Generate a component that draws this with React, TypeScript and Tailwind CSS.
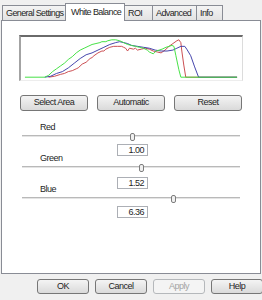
const font = { fontFamily: '"Liberation Sans", Arial, sans-serif' };

const tabs = [
  { label: "General Settings", w: "w-[64px]" },
  { label: "White Balance", w: "w-[60px]", active: true },
  { label: "ROI", w: "w-[29px]" },
  { label: "Advanced", w: "w-[45px]" },
  { label: "Info", w: "w-[27px]" },
];

const red =
  "28,43 34,42 40,40 44,39 48,37 52,36 56,34 58,33 62,29 66,27 70,23 72,22 74,20 78,17 82,15 84,15 86,13 90,11 94,10 98,10 102,10 104,11 106,12 108,15 110,12 114,13 116,12 118,14 122,13 126,12 130,13 134,15 138,16 142,17 146,14 150,10 154,7 158,4 160,3 162,6 163,15 165,30 167,43 219,43";
const blue =
  "24,43 30,42 36,39 42,37 48,33 54,28 60,23 66,19 72,17 78,14 84,11 90,8 96,6 100,5 104,6 108,7 112,9 118,10 124,11 130,12 136,14 142,15 148,15 154,14 158,12 162,10 166,10 168,13 172,20 176,32 180,43 219,43";
const green =
  "4,43 24,43 28,41 32,37 36,34 40,31 44,28 48,24 52,21 56,17 60,14 64,12 68,10 72,8 76,7 80,6 82,5 86,5 88,4 92,3 96,3 100,4 104,6 108,8 112,9 116,10 120,11 124,12 128,14 130,16 132,17 134,18 137,15 140,14 143,13 147,11 150,10 153,9 155,10 157,20 160,35 162,43 219,43";

function Btn({ label, w, disabled }: { label: string; w: string; disabled?: boolean }) {
  return (
    <div
      className={`${w} flex shrink-0 items-center justify-center rounded-[3px] border ${
        disabled
          ? "border-[#b5b8bb] bg-[#f4f4f4] text-[#a3a3a3]"
          : "border-[#767676] bg-linear-to-b from-[#f4f4f4] to-[#dadada] text-[#1e1e1e]"
      }`}
    >
      {label}
    </div>
  );
}

function Slider({ pos }: { pos: number }) {
  return (
    <div className="relative ml-[20px] h-[9px] w-[218px]">
      <div className="absolute top-[3px] left-0 h-[2px] w-full border-t border-[#b9b9b9] bg-[#e4e4e4]" />
      <div
        className="absolute top-[1px] h-[8px] w-[5px] rounded-[2px] border border-[#7d7d7d] bg-[#f0f0f0]"
        style={{ left: pos - 22 - 2 }}
      />
    </div>
  );
}

function Value({ v }: { v: string }) {
  return (
    <div className="flex h-[12px] w-[31px] items-center justify-end border border-[#acafb5] bg-white pr-[3px] leading-none">
      {v}
    </div>
  );
}

export default function App() {
  return (
    <div
      className="h-[300px] w-[262px] overflow-hidden bg-[#f0f0f0] pt-[3px] text-[9px] tracking-[-0.5px] text-[#1e1e1e]"
      style={font}
    >
      {/* tabs */}
      <div className="relative z-10 -mb-px flex h-[18px] items-end pl-[2px] tracking-[-0.6px] whitespace-nowrap">
        {tabs.map((t, i) =>
          t.active ? (
            <div
              key={t.label}
              className={`${t.w} -ml-px flex h-[18px] shrink-0 items-center overflow-hidden border border-b-0 border-[#898c95] bg-white pl-[5px]`}
            >
              {t.label}
            </div>
          ) : (
            <div
              key={t.label}
              className={`${t.w} ${i > 0 ? "-ml-px" : ""} mb-px flex h-[15px] shrink-0 items-center overflow-hidden border border-b-0 border-[#898c95] bg-linear-to-b from-[#f4f4f4] to-[#e3e3e3] pt-[2px] pl-[3px]`}
            >
              {t.label}
            </div>
          )
        )}
      </div>

      {/* panel */}
      <div className="ml-px h-[254px] w-[260px] border border-[#898c95] bg-white">
        <div className="mt-[14px] ml-[17px] h-[46px] w-[224px] border-t-2 border-l-2 border-r border-b border-t-[#6a6a6a] border-l-[#a3a3a3] border-r-[#dcdcdc] border-b-[#ededed]">
          <svg width="221" height="43" viewBox="0 0 224 46" preserveAspectRatio="none">
            <polyline points={red} fill="none" stroke="#c9474b" strokeWidth="1" />
            <polyline points={blue} fill="none" stroke="#3d3da8" strokeWidth="1" />
            <polyline points={green} fill="none" stroke="#3fe03f" strokeWidth="1" />
          </svg>
        </div>

        <div className="mt-[14px] ml-[18px] flex h-[16px] gap-[9px]">
          <Btn label="Select Area" w="w-[68px]" />
          <Btn label="Automatic" w="w-[68px]" />
          <Btn label="Reset" w="w-[68px]" />
        </div>

        <div className="mt-[11px] ml-[38px] h-[10px] leading-[10px]">Red</div>
        <Slider pos={132} />

        <div className="mt-[3px] flex">
          <div className="ml-[38px] mt-[9px] h-[10px] w-[77px] leading-[10px]">Green</div>
          <Value v="1.00" />
        </div>
        <Slider pos={141} />

        <div className="mt-[5px] flex">
          <div className="ml-[38px] mt-[7px] h-[10px] w-[77px] leading-[10px]">Blue</div>
          <Value v="1.52" />
        </div>
        <Slider pos={173} />

        <div className="mt-[3px] ml-[115px]">
          <Value v="6.36" />
        </div>
      </div>

      {/* dialog buttons */}
      <div className="mt-[5px] ml-[37px] flex h-[15px] gap-[6px]">
        <Btn label="OK" w="w-[52px]" />
        <Btn label="Cancel" w="w-[52px]" />
        <Btn label="Apply" w="w-[52px]" disabled />
        <Btn label="Help" w="w-[52px]" />
      </div>
    </div>
  );
}
